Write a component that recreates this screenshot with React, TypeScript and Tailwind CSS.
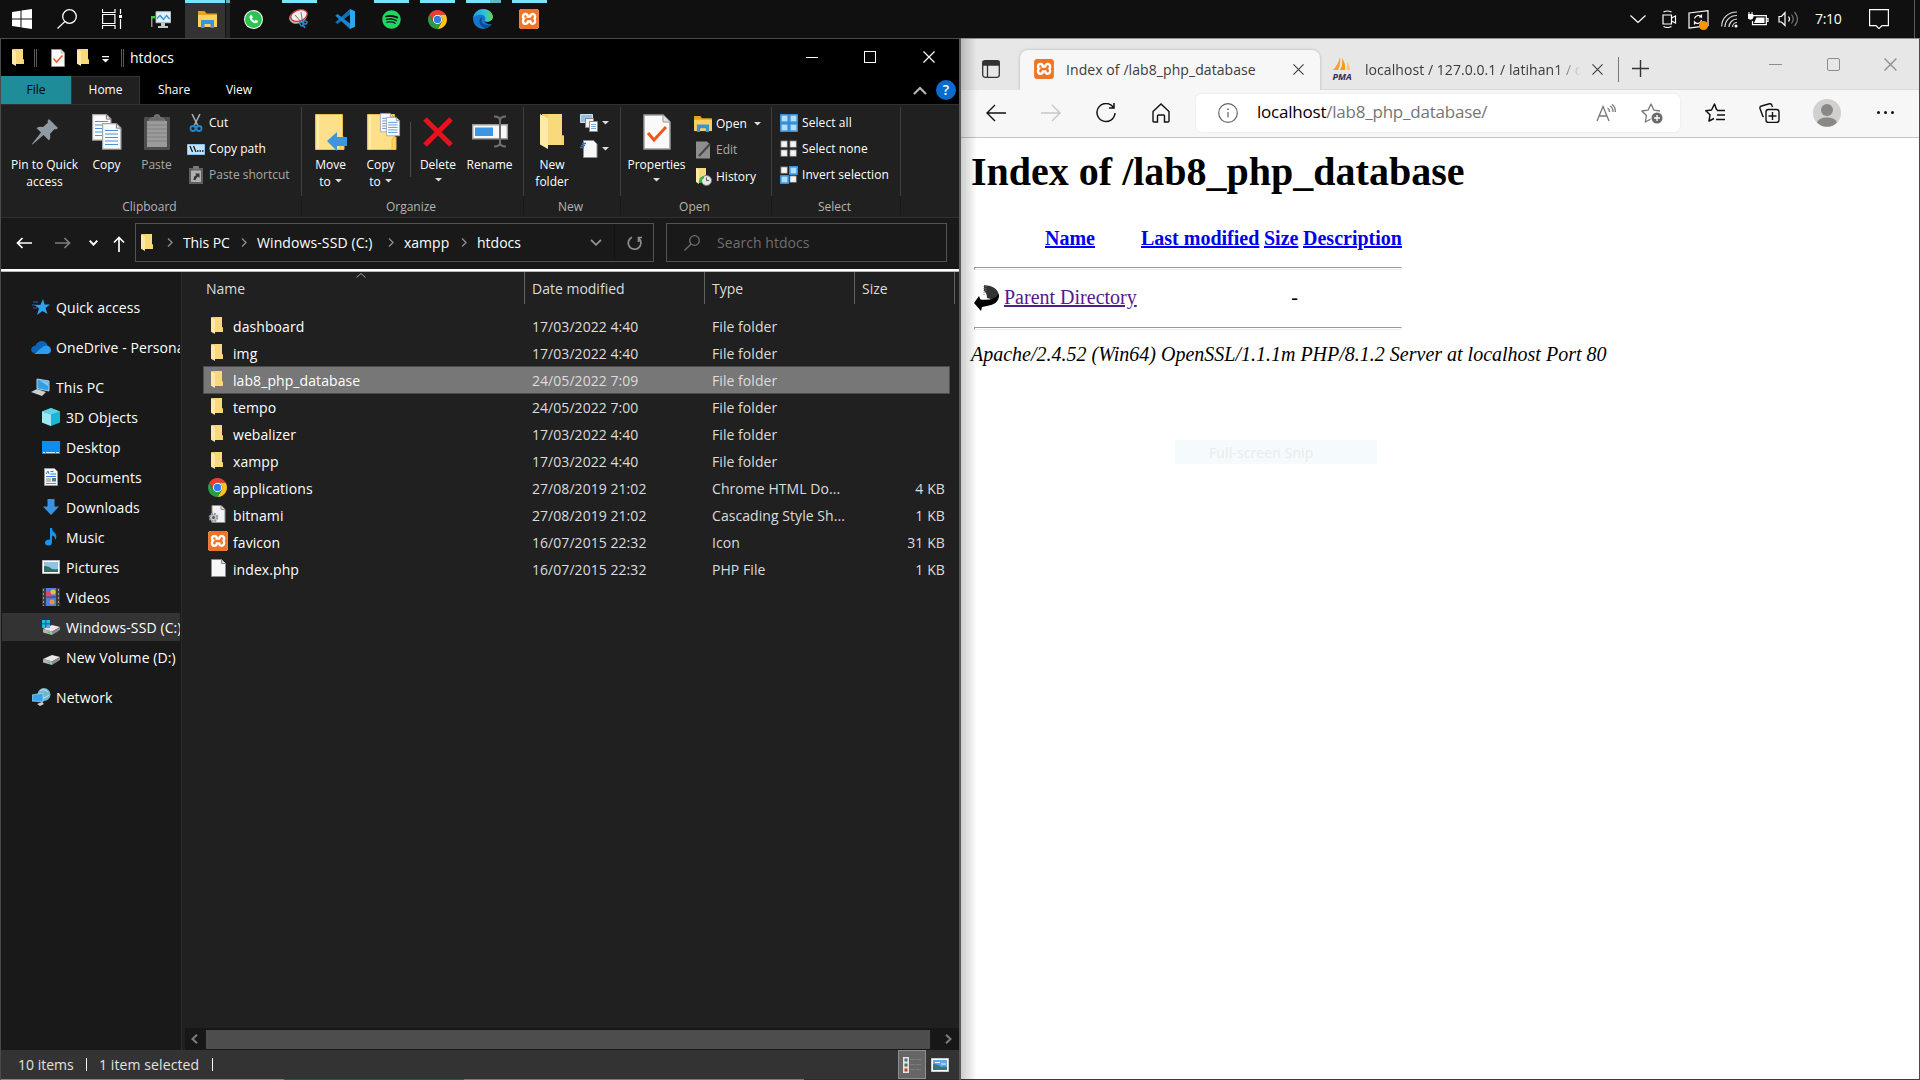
import React from "react";
import { FaSpotify, FaWhatsapp } from "react-icons/fa";
import { SiXampp } from "react-icons/si";

type IconProps = { className?: string };

/* ---------- shared icons ---------- */

const Folder = ({ className = "w-3 h-[17px]" }: IconProps) => (
  <svg viewBox="0 0 12 17" preserveAspectRatio="none" className={className}>
    <path d="M1 0h10v10.500h1v4.500H3z" fill="#f3d06c" />
    <path d="M4 0h7v15H4z" fill="#f8da7c" />
    <path d="M0 0l4 2.200V17L0 14.800z" fill="#ffe9a8" />
    <path d="M10.500 10.500H12V15h-1.500z" fill="#fbd465" />
  </svg>
);

const Chrome = ({ className = "w-5 h-5" }: IconProps) => (
  <svg viewBox="0 0 24 24" className={className}>
    <path d="M12 6H22.390A12 12 0 0 0 1.610 6L6.800 15A6 6 0 0 1 12 6Z" fill="#e8402f" />
    <path d="M17.200 15L12 24A12 12 0 0 0 22.390 6H12A6 6 0 0 1 17.200 15Z" fill="#fcc31e" />
    <path d="M6.800 15L1.610 6A12 12 0 0 0 12 24L17.200 15A6 6 0 0 1 6.800 15Z" fill="#2a9c46" />
    <circle cx="12" cy="12" r="5.900" fill="#fff" />
    <circle cx="12" cy="12" r="4.600" fill="#2f7be8" />
  </svg>
);

const Xampp = ({ className = "w-5 h-5" }: IconProps) => (
  <span className={`flex items-center justify-center bg-white rounded-[3px] overflow-hidden ${className}`}>
    <SiXampp className="w-full h-full text-[#f07427]" />
  </span>
);

const PageIcon = ({ className = "w-[15px] h-[18px]" }: IconProps) => (
  <svg viewBox="0 0 15 18" className={className}>
    <path d="M.5.5h10l4 4v13H.5z" fill="#f7f7f7" stroke="#8d8d8d" />
    <path d="M10.500.5v4h4" fill="#d9d9d9" stroke="#8d8d8d" />
  </svg>
);

const CheckPage = ({ className = "w-[14px] h-[18px]" }: IconProps) => (
  <svg viewBox="0 0 28 36" className={className}>
    <path d="M1 1h19l7 7v27H1z" fill="#fafafa" stroke="#9a9a9a" strokeWidth="1.500" />
    <path d="M20 1v7h7" fill="#e2e2e2" stroke="#9a9a9a" />
    <path d="M5 19l6 7L23 13" fill="none" stroke="#f0571c" strokeWidth="3" />
  </svg>
);

const Explorer = ({ className = "w-[19px] h-[17px]" }: IconProps) => (
  <svg viewBox="0 0 19 17" className={className}>
    <path d="M0 0h6.500l2 2.500H19V8H0z" fill="#e8a31c" />
    <path d="M0 4h19v12H0z" fill="#fdd35d" />
    <path d="M3 9h13v8h-3.500v-4h-6v4H3z" fill="#3c92dc" />
  </svg>
);

const Caret = ({ className = "" }: IconProps) => (
  <svg viewBox="0 0 7 4" className={`w-[7px] h-1 ${className}`}>
    <path d="M0 0h7L3.500 3.500z" fill="#dcdcdc" />
  </svg>
);

const Chevron = ({ className = "" }: IconProps) => (
  <svg viewBox="0 0 6 9" className={`w-1.5 h-[9px] ${className}`}>
    <path d="M1 .5l4 4-4 4" fill="none" stroke="#8b8b8b" strokeWidth="1.400" />
  </svg>
);

const CloseX = ({ className = "w-3 h-3" }: IconProps) => (
  <svg viewBox="0 0 12 12" className={className} stroke="currentColor" strokeWidth="1.200">
    <path d="M.5.5l11 11M11.500.5l-11 11" />
  </svg>
);

/* ---------- taskbar ---------- */

const Slot = ({ children, bar }: { children: React.ReactNode; bar?: "plain" | "split" | "active" }) => (
  <div className="relative h-[38px] w-[46px] shrink-0 flex items-center justify-center">
    {bar === "active" && (
      <div className="absolute left-px top-0 flex h-[38px] w-[45px]">
        <div className="w-10 bg-[#333333] border-t-[3px] border-[#76e5fb]" />
        <div className="w-px bg-[#171717]" />
        <div className="w-1 bg-[#262626] border-t-[3px] border-[#5fb6c7]" />
      </div>
    )}
    {bar === "plain" && <div className="absolute top-0 left-1.5 w-[35px] h-[3px] bg-[#76e5fb]" />}
    {bar === "split" && (
      <div className="absolute top-0 left-1.5 w-[35px] h-[3px] flex">
        <div className="w-6 bg-[#76e5fb]" />
        <div className="grow bg-[#5fb6c7]" />
      </div>
    )}
    <div className="relative">{children}</div>
  </div>
);

const Taskbar = () => (
  <header className="h-[38px] bg-[#101010] flex items-center shrink-0">
    <div className="w-[44px] flex justify-center">
      <svg viewBox="0 0 20 20" className="w-5 h-5" fill="#fff">
        <path d="M0 3l8.500-1.200v7.700H0zM9.500 1.600L20 0v9.500H9.500zM0 10.500h8.500v7.700L0 17zM9.500 10.500H20V20L9.500 18.400z" />
      </svg>
    </div>
    <div className="w-[45px] flex justify-center">
      <svg viewBox="0 0 20 20" className="w-5 h-5" fill="none" stroke="#fff" strokeWidth="1.300">
        <circle cx="12.500" cy="7.500" r="6.800" />
        <path d="M7.800 12.600L.5 19.500" />
      </svg>
    </div>
    <div className="w-[46px] flex justify-center">
      <svg viewBox="0 0 20 20" className="w-5 h-5" fill="none" stroke="#fff" strokeWidth="1.200">
        <path d="M.5 0v3.500h12.500V0M.5 20v-3.500h12.500V20M.6 5.500h12.300v9H.6zM18.500 0v5M18.500 10v10" />
        <path d="M17 6h3v3h-3z" fill="#fff" stroke="none" />
      </svg>
    </div>
    <div className="w-[3px]" />
    <Slot>
      <svg viewBox="0 0 20 19" className="w-5 h-[19px]">
        <path d="M0 6h4v1.500H1.500V17H0z" fill="#8d9396" />
        <path d="M1 6h3v2.500H1z" fill="#31d331" />
        <path d="M5 1.700h14.500v11H5z" fill="#dff2fb" stroke="#b8bdc0" />
        <path d="M6 8.500l3-3 3.500 4 3-4 3 3.500" fill="none" stroke="#2f8fc9" strokeWidth="1.200" />
        <path d="M10 13h4v3h3v2H7v-2h3z" fill="#c4c8ca" />
      </svg>
    </Slot>
    <Slot bar="active"><Explorer className="w-[19px] h-[17px]" /></Slot>
    <Slot>
      <div className="w-[19px] h-[19px] rounded-full bg-white flex items-center justify-center">
        <div className="w-[17px] h-[17px] rounded-full bg-[#2fc351] flex items-center justify-center">
          <svg viewBox="0 0 16 16" className="w-[17px] h-[17px]"><path d="M4.800 4.200q1-1 1.800 0l.8 1.700-.9 1.200q.8 1.500 2.500 2.300l1.100-1.100 1.900.9q.5 1-.6 1.900-1.800 1-4.500-.8Q4.500 8.200 4.200 6q0-1.200.6-1.800z" fill="#fff" /></svg>
        </div>
      </div>
    </Slot>
    <Slot bar="plain">
      <svg viewBox="0 0 20 20" className="w-5 h-5">
        <ellipse cx="9" cy="8" rx="9" ry="6.500" transform="rotate(-20 9 8)" fill="#b9b9b9" />
        <ellipse cx="10" cy="6.500" rx="8.500" ry="5.500" transform="rotate(-20 10 6.500)" fill="#f6eeee" stroke="#cf3232" strokeWidth="1.300" />
        <path d="M6 6l7 8M12 3l1.500 10" stroke="#777" strokeWidth="1" />
        <path d="M12 12c-3 2 0 5 1 5s2-2 0-4c2-2 6-1 5 1s-3 1-4-1c0 3 1 5 2 6" fill="none" stroke="#2c83c9" strokeWidth="1.500" />
      </svg>
    </Slot>
    <Slot>
      <svg viewBox="0 0 20 20" className="w-5 h-5">
        <path d="M15 0l5 2.200v15.600L15 20z" fill="#2aa7f0" />
        <path d="M15 0v5.500L2.500 15 .3 13.200z" fill="#0f72b8" />
        <path d="M15 20v-5.500L2.500 5 .3 6.800z" fill="#1a86d2" />
      </svg>
    </Slot>
    <Slot bar="plain"><FaSpotify className="w-[19px] h-[19px] text-[#1ed760]" /></Slot>
    <Slot bar="plain"><Chrome className="w-[19px] h-[19px]" /></Slot>
    <Slot bar="split">
      <svg viewBox="0 0 20 20" className="w-5 h-5">
        <defs>
          <linearGradient id="edgeTop" x1="0" x2="1">
            <stop offset="0" stopColor="#1a9be0" />
            <stop offset=".6" stopColor="#35c1d6" />
            <stop offset="1" stopColor="#62d84e" />
          </linearGradient>
        </defs>
        <circle cx="10" cy="10" r="10" fill="#1576cf" />
        <path d="M0 9.500C.5 4 5 0 10.300 0 16 0 20 4 20 8.300c0 3-2.200 4.700-4.700 4.700-2.300 0-3.800-1-3.300-2 .8-1 .7-3.800-2.500-4.900C6 5 1.500 6.500 0 9.500z" fill="url(#edgeTop)" />
        <path d="M7.500 9c-2 3-1.500 8 4.500 10 3 .5 6-2 7-4-3 1.500-8 1.500-10-1.500C8.200 12 8.500 10 9.500 8z" fill="#0c4a94" />
        <path d="M20 9v5.500c-3 1.200-6.500.8-8.300-2C14 13.500 18.500 13 20 9z" fill="#101010" />
      </svg>
    </Slot>
    <Slot bar="plain"><Xampp className="w-5 h-5" /></Slot>

    <div className="ml-auto flex items-center h-full pr-[5px] text-white">
      <svg viewBox="0 0 16 8" className="w-4 h-2 mr-4" fill="none" stroke="#fff" strokeWidth="1.200">
        <path d="M.5.5L8 7.500 15.500.5" />
      </svg>
      <svg viewBox="0 0 15 18" className="w-[15px] h-[18px] mr-[11px]" fill="none" stroke="#fff" strokeWidth="1.200">
        <path d="M1 5h8.500v9H1zM9.500 8l4-2v7l-4-2M1.500 2Q5.500 0 9.500 2M1.500 16.500q4 2 8 0" />
      </svg>
      <div className="relative mr-3 w-[21px] h-[19px]">
        <svg viewBox="0 0 21 19" className="w-[21px] h-[19px]" fill="none" stroke="#fff" strokeWidth="1.200">
          <path d="M1 3L20 .7v15L1 18zM6.500 8.500A4 4 0 0 1 13.500 7V4.500M13.500 7H11M13.500 10a4 4 0 0 1-7 2v2.500" />
        </svg>
        <span className="absolute left-[11px] top-[11px] w-[9px] h-[9px] rounded-full bg-[#ff9500]" />
      </div>
      <svg viewBox="0 0 17 17" className="w-[17px] h-[17px] mr-[10px]" fill="none" stroke="#fff" strokeWidth="1.200">
        <path d="M.7 15.500C.7 7 7 1 16 1M4 16C4 9.500 9 4.500 16 4.500M8 16c0-4 3.500-8 8-8M11.500 16c0-2.500 2-4.500 4.500-4.500" stroke="#ddd" />
        <circle cx="15" cy="15" r="1.500" fill="#fff" stroke="none" />
      </svg>
      <svg viewBox="0 0 21 15" className="w-[21px] h-[15px] mr-[9px]" fill="none" stroke="#fff" strokeWidth="1.200">
        <path d="M5 3.600h13.300v9H4.500V9M18.500 6.500H20v3h-1.500" />
        <path d="M8.500 5.500h8v5.500H6z" fill="#fff" stroke="none" />
        <path d="M0 2.500h5v2.200a2.500 2.500 0 0 1-5 0zM1 0v2.500M4 0v2.500" fill="#fff" strokeWidth="1" />
      </svg>
      <svg viewBox="0 0 21 18" className="w-[21px] h-[18px] mr-[16px]" fill="none" stroke="#fff" strokeWidth="1.200">
        <path d="M1 6.500h2.500L7 2.500v13L3.500 12H1zM10.500 6.500q2 2.500 0 5" />
        <path d="M13.500 4.500q3.500 4.500 0 9M16.500 2q6 7 0 14" stroke="#777" />
      </svg>
      <span className="w-[28px] text-[14px] leading-none tracking-[-0.3px] whitespace-nowrap">7:10</span>
      <svg viewBox="0 0 20 20" className="w-5 h-5 ml-[26px]" fill="none" stroke="#fff" strokeWidth="1.200">
        <path d="M.6.6h18.800v16H13l-3 3-3-3H.6z" />
      </svg>
      <div className="ml-[25px] w-px h-full bg-[#5b5b5b]" />
    </div>
  </header>
);

/* ---------- explorer: title bar + ribbon ---------- */

const TitleBar = () => (
  <div className="h-[37px] bg-black flex items-center pl-[11px] text-white">
    <Folder />
    <div className="ml-[10px] w-[3px] h-[18px] border-x border-[#5a5a5a]" />
    <CheckPage className="ml-[14px] w-[14px] h-[18px]" />
    <Folder className="ml-3 w-3 h-[17px]" />
    <svg viewBox="0 0 7 7" className="w-[7px] h-[7px] ml-[13px] mt-[3px]" fill="#fff"><path d="M0 0h7v1.200H0zM0 3h7L3.500 6.500z" /></svg>
    <div className="ml-[12px] w-[3px] h-[18px] border-x border-[#5a5a5a]" />
    <span className="ml-[6px] text-[14px] pb-px">htdocs</span>
    <div className="ml-auto flex items-center pr-[24px] pb-px">
      <div className="w-3 h-px bg-white" />
      <div className="ml-[46px] w-3 h-3 border border-white" />
      <CloseX className="w-3 h-3 ml-[47px]" />
    </div>
  </div>
);

const TabsRow = () => (
  <div className="h-7 bg-black flex items-stretch text-[12px] text-white">
    <div className="w-[70px] bg-[#1f8c99] text-black flex items-center justify-center">File</div>
    <div className="w-[69px] bg-[#202020] border border-b-0 border-[#343434] flex items-center justify-center pb-px">Home</div>
    <div className="w-[68px] flex items-center justify-center">Share</div>
    <div className="w-[62px] flex items-center justify-center">View</div>
    <div className="ml-auto flex items-center pr-[3px]">
      <svg viewBox="0 0 14 9" className="w-[14px] h-[9px] mr-[9px]" fill="none" stroke="#b5b5b5" strokeWidth="2.200"><path d="M1 8l6-6 6 6" /></svg>
      <span className="w-5 h-5 mb-px rounded-full bg-[#0a6ccf] text-white font-semibold text-[14px] leading-none flex items-center justify-center">?</span>
    </div>
  </div>
);

const Big = ({ icon, lines, w, muted, caret }: { icon: React.ReactNode; lines: string[]; w: string; muted?: boolean; caret?: boolean }) => (
  <div className={`flex flex-col items-center ${w} ${muted ? "text-[#a9a9a9]" : "text-white"}`}>
    <div className="h-[49px] flex items-center">{icon}</div>
    {lines.map((l, i) => (
      <div key={l} className="h-[17px] leading-[17px] whitespace-nowrap flex items-center gap-1">
        {l}
        {caret && i > 0 && i === lines.length - 1 && <Caret className="-mt-0.5" />}
      </div>
    ))}
    {caret && lines.length === 1 && <Caret className="mt-[5px]" />}
  </div>
);

const Small = ({ icon, label, muted, caret }: { icon: React.ReactNode; label: string; muted?: boolean; caret?: boolean }) => (
  <div className={`h-[26px] flex items-center whitespace-nowrap ${muted ? "text-[#a9a9a9]" : "text-white"}`}>
    <span className="w-[22px] flex items-center">{icon}</span>
    {label}
    {caret && <Caret className="ml-[7px]" />}
  </div>
);

const Group = ({ label, w, children }: { label: string; w: string; children: React.ReactNode }) => (
  <div className={`flex ${w}`}>
    <div className="grow min-w-0 flex flex-col">
      <div className="flex h-[92px] pt-[2px]">{children}</div>
      <div className="text-center text-[#b4b4b4] leading-[19px] pr-[3px]">{label}</div>
    </div>
    <div className="w-px mt-[2px] h-[108px] bg-[#181818]"><div className="h-[89px] bg-[#3f3f3f]" /></div>
  </div>
);

const Doc = ({ x, y, s = 1 }: { x: number; y: number; s?: number }) => (
  <g transform={`translate(${x} ${y}) scale(${s})`}>
    <path d="M.6.6h13.800l4.500 4.500v21H.6z" fill="#fbfbfb" stroke="#a5a5a5" strokeWidth="1.200" />
    <path d="M14.400.6v4.500h4.500" fill="none" stroke="#777" />
    <path d="M3 7.500h13M3 11h13M3 14.500h13M3 18h13M3 21.500h13" stroke="#4c91dd" strokeWidth="1.200" />
  </g>
);

const BigFolder = () => (
  <>
    <path d="M.5 2.500h27v35H.5z" fill="#ffe08a" stroke="#e9bf4b" />
    <path d="M3 3v34" stroke="#fff0bd" strokeWidth="1.500" />
    <path d="M25 28q0-3 4-3v12.500h-4z" fill="#fbd465" stroke="#e9bf4b" />
  </>
);

const Tiles = ({ on }: { on: boolean[] }) => (
  <svg viewBox="0 0 18 18" className="w-[18px] h-[18px]">
    {[[0, 0], [9, 0], [0, 9], [9, 9]].map(([x, y], i) => (
      <rect key={i} x={x + 0.9} y={y + 0.9} width={on[i] ? 7.2 : 6.4} height={on[i] ? 7.2 : 6.4} fill={on[i] ? "#b5ddfb" : "#f5f5f5"} stroke={on[i] ? "#3d9ae6" : "#6d6d6d"} strokeWidth={on[i] ? 1.6 : 0.8} />
    ))}
  </svg>
);

const Ribbon = () => (
  <div className="h-[114px] bg-[#202020] border-y border-[#313131] flex text-[12px]">
    <Group label="Clipboard" w="w-[301px]">
      <Big w="w-[87px]" lines={["Pin to Quick", "access"]} icon={
        <svg viewBox="0 0 26 26" className="w-[26px] h-[26px]" fill="#8f9aa3"><path d="M17 0l9 9-2 1.500-1.500-.5-4.500 5q1 4-1 6.500l-5.500-5.500L.5 25.500 0 25l9-11.500L4.500 9q3-2 6.500-1l5-4.500L15.500 2z" /></svg>
      } />
      <Big w="w-[37px]" lines={["Copy"]} icon={
        <svg viewBox="0 0 30 36" className="w-[30px] h-9"><Doc x={0} y={0} /><Doc x={10} y={9} /></svg>
      } />
      <Big w="w-[63px]" muted lines={["Paste"]} icon={
        <svg viewBox="0 0 26 36" className="w-[26px] h-9">
          <rect y="3" width="26" height="33" rx="1" fill="#4d4d4d" />
          <path d="M3 7h20v26H3z" fill="#9b9b9b" />
          <path d="M3 11h20M3 15h20M3 19h20M3 23h20M3 27h20" stroke="#808080" />
          <path d="M5 7q0-3 5-3.500 0-3 3-3t3 3q5 .5 5 3.500z" fill="#6a6a6a" stroke="#8a8a8a" strokeWidth=".7" />
        </svg>
      } />
      <div className="pt-[3px] -ml-[1px]">
        <Small label="Cut" icon={
          <svg viewBox="0 0 18 18" className="w-[18px] h-[18px]" fill="none">
            <path d="M5 0l6 12M13 0L7 12" stroke="#a9b3ba" strokeWidth="1.500" />
            <circle cx="6" cy="14.500" r="2.500" stroke="#2586c8" strokeWidth="1.800" /><circle cx="12" cy="14.500" r="2.500" stroke="#2586c8" strokeWidth="1.800" />
          </svg>} />
        <Small label="Copy path" icon={
          <svg viewBox="0 0 18 11" className="w-[18px] h-[11px]">
            <path d="M.5.5h17v10H.5z" fill="#bfe3fa" stroke="#8cc4ea" /><path d="M3 2l2.500 6M6.500 2L9 8" stroke="#111" strokeWidth="1.200" /><path d="M10 7h1.500M12.500 7H14M15 7h1.500" stroke="#111" strokeWidth="1.500" />
          </svg>} />
        <Small label="Paste shortcut" muted icon={
          <svg viewBox="0 0 18 18" className="w-[18px] h-[18px]">
            <path d="M2 2h14v16H2z" fill="#5f5f5f" /><path d="M4 4.500h10v11.500H4z" fill="#b0b0b0" /><path d="M6 0h6v3.500H6z" fill="#777" /><path d="M6.500 14q0-4 3-5L8 7.500h4.500V12L11 10.500q-2 1-2.500 3.500z" fill="#333" />
          </svg>} />
      </div>
    </Group>
    <Group label="Organize" w="w-[222px]">
      <div className="w-[3px]" />
      <Big w="w-[51px]" caret lines={["Move", "to"]} icon={
        <svg viewBox="0 0 33 40" className="w-[33px] h-10 ml-[2px]"><BigFolder /><path d="M12 29l10-9v5h10v9H22v5z" fill="#3d95e0" /></svg>
      } />
      <Big w="w-[49px]" caret lines={["Copy", "to"]} icon={
        <svg viewBox="0 0 34 40" className="w-[34px] h-10 ml-[7px]"><BigFolder /><Doc x={13} y={1} s={0.72} /><Doc x={19} y={5} s={0.72} /></svg>
      } />
      <div className="ml-[5px] mt-[15px] w-px h-[55px] bg-[#4a4a4a]" />
      <Big w="w-[54px]" caret lines={["Delete"]} icon={
        <svg viewBox="0 0 30 30" className="w-[30px] h-[30px]" stroke="#e8111c" strokeWidth="5"><path d="M2 2l26 26M28 2L2 28" /></svg>
      } />
      <Big w="w-[49px]" lines={["Rename"]} icon={
        <svg viewBox="0 0 36 34" className="w-9 h-[34px]">
          <path d="M.7 9.700h34.600v14H.7z" fill="#f7f7f7" stroke="#9c9c9c" strokeWidth="1.400" />
          <path d="M3 12.500h18v8.500H3z" fill="#3a97e3" />
          <path d="M22 1.500q6 0 6 4v22q0 4-6 4M34 1.500q-6 0-6 4v22q0 4 6 4" fill="none" stroke="#6e6e6e" strokeWidth="2" />
        </svg>
      } />
    </Group>
    <Group label="New" w="w-[97px]">
      <Big w="w-[56px]" lines={["New", "folder"]} icon={<Folder className="w-[24px] h-[35px]" />} />
      <div className="pt-[3px]">
        <div className="h-[26px] flex items-center gap-1">
          <svg viewBox="0 0 18 18" className="w-[18px] h-[18px]">
            <path d="M.5.5h12v8H.5z" fill="#8cc5e0" stroke="#cfe3ec" /><path d="M5.500 4.500h8v9h-8z" fill="#eee" stroke="#888" /><path d="M9.500 7.500h8v10h-8z" fill="#fff" stroke="#888" /><path d="M11 10.500h5M11 12.500h5M11 14.500h5" stroke="#7aaee0" />
          </svg>
          <Caret />
        </div>
        <div className="h-[26px] flex items-center gap-1">
          <svg viewBox="0 0 18 18" className="w-[18px] h-[18px]">
            <path d="M3.500.5h10l3.500 3.500v13.500H3.500z" fill="#f7f7f7" stroke="#8d8d8d" /><path d="M2 3.500h4M1 5.500h4M0 7.500h4" stroke="#2174c4" strokeWidth="1.300" />
          </svg>
          <Caret />
        </div>
      </div>
    </Group>
    <Group label="Open" w="w-[151px]">
      <Big w="w-[71px]" caret lines={["Properties"]} icon={<CheckPage className="w-[28px] h-9" />} />
      <div className="pt-1 pl-[2px]">
        <Small label="Open" caret icon={<Explorer className="w-[18px] h-4" />} />
        <Small label="Edit" muted icon={
          <svg viewBox="0 0 18 18" className="w-[18px] h-[18px]"><path d="M2 .5h11l3 3v14H2z" fill="#8e8e8e" /><path d="M5 15L16 3" stroke="#444" strokeWidth="2" /></svg>} />
        <div className="pt-px">
          <Small label="History" icon={
            <svg viewBox="0 0 18 18" className="w-[18px] h-[18px]">
              <path d="M2 0h10v14H2z" fill="#f8da7c" /><path d="M2 0l3 2v14l-3-2z" fill="#ffe9a8" />
              <circle cx="12.500" cy="12.500" r="5" fill="#e6e6e6" stroke="#777" /><path d="M12.500 9.500v3h2.500" stroke="#555" fill="none" /><path d="M6 15q0-5 4-6" stroke="#2fb53f" strokeWidth="2.500" fill="none" />
            </svg>} />
        </div>
      </div>
    </Group>
    <Group label="Select" w="w-[129px]">
      <div className="pl-2 pt-[3px] tracking-[0.08px]">
        <Small label="Select all" icon={<Tiles on={[true, true, true, true]} />} />
        <Small label="Select none" icon={<Tiles on={[false, false, false, false]} />} />
        <Small label="Invert selection" icon={<Tiles on={[false, true, true, false]} />} />
      </div>
    </Group>
  </div>
);

const AddressRow = () => (
  <div className="h-[51px] bg-[#191919] flex items-center pl-[15px] pb-0.5 text-[14px] text-white">
    <svg viewBox="0 0 16 12" className="w-4 h-3" fill="none" stroke="#fff" strokeWidth="1.700"><path d="M6.500 1l-5 5 5 5M1.500 6H16" /></svg>
    <svg viewBox="0 0 16 12" className="w-4 h-3 ml-[23px]" fill="none" stroke="#7d7d7d" strokeWidth="1.700"><path d="M9.500 1l5 5-5 5M14.500 6H0" /></svg>
    <svg viewBox="0 0 9 6" className="w-[9px] h-1.5 ml-[18px]" fill="none" stroke="#fff" strokeWidth="1.900"><path d="M.7.7l3.800 4 3.800-4" /></svg>
    <svg viewBox="0 0 12 16" className="w-3 h-4 ml-[15px] mt-[3px]" fill="none" stroke="#fff" strokeWidth="1.700"><path d="M1 6.500l5-5 5 5M6 1.500V16" /></svg>
    <div className="ml-[10px] w-[519px] h-[39px] border border-[#535353] flex items-center">
      <Folder className="ml-[5px] w-3 h-[17px]" />
      <Chevron className="ml-[14px]" />
      <span className="ml-[10px] w-[47px] tracking-[-0.1px] whitespace-nowrap">This PC</span>
      <Chevron className="ml-[11px]" />
      <span className="ml-[10px] w-[120px] tracking-[0.1px] whitespace-nowrap">Windows-SSD (C:)</span>
      <Chevron className="ml-[11px]" />
      <span className="ml-[10px] w-[46px] whitespace-nowrap">xampp</span>
      <Chevron className="ml-[11px]" />
      <span className="ml-[10px]">htdocs</span>
      <svg viewBox="0 0 12 7" className="w-3 h-[7px] ml-auto mr-[12px]" fill="none" stroke="#969696" strokeWidth="1.700"><path d="M1 .8l5 5 5-5" /></svg>
      <div className="w-px h-[37px] bg-[#131313]" />
      <svg viewBox="0 0 16 16" className="w-4 h-4 ml-[12px] mr-[10px]" fill="none" stroke="#8e8e8e" strokeWidth="1.700"><path d="M5 2.200A6.300 6.300 0 1 0 11.500 3M11.500 7V2.500H15" /></svg>
    </div>
    <div className="ml-3 w-[281px] h-[39px] border border-[#535353] flex items-center pl-[17px] text-[#6f6f6f]">
      <svg viewBox="0 0 16 16" className="w-4 h-4" fill="none" stroke="#6f6f6f" strokeWidth="1.300"><circle cx="10.500" cy="5.500" r="4.800" /><path d="M7 9L.5 15.500" /></svg>
      <span className="ml-[17px] tracking-[0.05px]">Search htdocs</span>
    </div>
  </div>
);

/* ---------- explorer: sidebar ---------- */

const ThisPcIcon = () => (
  <svg viewBox="0 0 20 18" className="w-5 h-[18px]">
    <path d="M6 1l12 2v10L6 10.500z" fill="#2f9fe8" stroke="#b9cfdc" /><path d="M8 2l9 2v4z" fill="#7cc9f7" /><path d="M0 14l6-3 9 3-4 4z" fill="#c9ced2" />
  </svg>
);

const Drive = ({ win }: { win?: boolean }) => (
  <svg viewBox="0 0 18 16" className="w-[18px] h-4">
    <path d="M1 10l9-4 8 2-8 4.500z" fill="#e9e9e9" /><path d="M1 10l9 2.500V16l-9-2.500z" fill="#b5b5b5" /><path d="M10 12.500L18 8v3l-8 5z" fill="#8d8d8d" />
    <path d="M6 13l2 .5v1L6 14z" fill="#2fd046" />
    {win && <path d="M0 1h3.500v3.500H0zM4.300 1H8v3.500H4.300zM0 5.300h3.500V9H0zM4.300 5.300H8V9H4.300z" fill="#19bff0" />}
  </svg>
);

const sideIcons: Record<string, React.ReactNode> = {
  quick: <svg viewBox="0 0 18 16" className="w-[18px] h-4"><path d="M11 0l1.500 5.500H18l-4.500 3.500 2 6L10.500 12 5 16l2-6.500L2.500 6l6-.3z" fill="#2fa3f2" /><path d="M1 3h5M0 6h4M1 9h4" stroke="#1b6da8" strokeWidth="1.200" /></svg>,
  cloud: <svg viewBox="0 0 20 13" className="w-5 h-[13px]"><path d="M3 12Q0 11 .2 8.500.5 5 4.500 4.500 6.500 0 11 0q4.500.3 5.500 4.500L10 9z" fill="#0d64b8" /><path d="M3 13l8-6.500q4-3 6.500-1.500Q20 6.500 20 9q0 3.500-3.500 4z" fill="#2d9df0" /></svg>,
  pc: <ThisPcIcon />,
  cube: <svg viewBox="0 0 18 18" className="w-[18px] h-[18px]"><path d="M9 0l9 3.500v11L9 18 0 14.500v-11z" fill="#1bb6d6" /><path d="M0 3.500l9 3V18l-9-3.500z" fill="#9fe7f2" /><path d="M9 0l9 3.500-9 3-9-3z" fill="#5ed1e4" /></svg>,
  desktop: <svg viewBox="0 0 18 13" className="w-[18px] h-[13px]"><path d="M0 0h18v13H0z" fill="#0d8df0" /><path d="M1 11.500h2M4 11.500h9M14 11.500h3" stroke="#cfeaff" /></svg>,
  docs: <svg viewBox="0 0 14 18" className="w-[14px] h-[18px]"><path d="M.5.5h10l3 3v14H.5z" fill="#f7f7f7" stroke="#999" /><path d="M2 6l2-3 1 3" stroke="#2a86d8" fill="none" /><path d="M6.500 3.500h3M6.500 6H12M2 8.500h10" stroke="#2a86d8" /><path d="M2 11h5M2 13h5M2 15.500h10" stroke="#888" /><path d="M8 10h4v3.500H8z" fill="#4a7f9c" /></svg>,
  down: <svg viewBox="0 0 16 16" className="w-4 h-4"><path d="M4.500 0h7v7.500H16L8 16 0 7.500h4.500z" fill="#3a93e0" /></svg>,
  music: <svg viewBox="0 0 12 18" className="w-3 h-[18px]"><path d="M5 0h2q0 3 2.500 4.500Q13 8 10 12q.5-4-3-4.500V14q0 3.500-3.500 3.500T0 14.500 5 11.500z" fill="#1495f0" /></svg>,
  pics: <svg viewBox="0 0 18 14" className="w-[18px] h-[14px]"><path d="M.5.500h17v13H.5z" fill="#fff" stroke="#bbb" /><path d="M2 2h14v10H2z" fill="#8dc4ea" /><path d="M2 6q5 0 8 3 3 .5 6 0v3H2z" fill="#2f6f60" /></svg>,
  video: <svg viewBox="0 0 18 18" className="w-[18px] h-[18px]"><path d="M0 0h18v18H0z" fill="#3b3b3b" /><path d="M4 0h10v8.500H4zM4 9.500h10V18H4z" fill="#4f7de0" /><path d="M4 4h5v4.500H4z" fill="#d44a68" /><circle cx="11" cy="4" r="2.500" fill="#e8c13a" /><circle cx="10" cy="14" r="2.500" fill="#e8963a" /><path d="M1.500 1v17M16.500 1v17" stroke="#999" strokeDasharray="2 2" /></svg>,
  win: <Drive win />,
  drive: <Drive />,
  net: <svg viewBox="0 0 19 18" className="w-[19px] h-[18px]"><circle cx="12" cy="6.500" r="6.500" fill="#6fb6cf" /><path d="M8 3q4-3 8 1M7 8q5 4 10-1" stroke="#c5e6f0" fill="none" /><path d="M0 7l11-2v9L0 13z" fill="#38a4ee" stroke="#bcd7e6" strokeWidth=".7" /><path d="M5 16l5-2 2 2-4 2z" fill="#ccd" /></svg>,
};

const sideItems = [
  { icon: "quick", label: "Quick access", top: true, gap: "mb-2.5" },
  { icon: "cloud", label: "OneDrive - Personal", top: true, gap: "mb-2.5" },
  { icon: "pc", label: "This PC", top: true, gap: "" },
  { icon: "cube", label: "3D Objects", gap: "" },
  { icon: "desktop", label: "Desktop", gap: "" },
  { icon: "docs", label: "Documents", gap: "" },
  { icon: "down", label: "Downloads", gap: "" },
  { icon: "music", label: "Music", gap: "" },
  { icon: "pics", label: "Pictures", gap: "" },
  { icon: "video", label: "Videos", gap: "" },
  { icon: "win", label: "Windows-SSD (C:)", gap: "", active: true },
  { icon: "drive", label: "New Volume (D:)", gap: "mb-2.5" },
  { icon: "net", label: "Network", top: true, gap: "" },
];

const Sidebar = () => (
  <nav className="w-[181px] bg-[#191919] pt-5 pl-px pr-px border-r border-[#2b2b2b] shrink-0 text-[14px] tracking-[0.1px] text-white">
    {sideItems.map((it) => (
      <div key={it.label} className={`h-[30px] py-px flex ${it.gap}`}>
        <div className={`w-full flex items-center overflow-hidden whitespace-nowrap ${it.active ? "bg-[#333333]" : ""}`}>
          <span className={`shrink-0 flex items-center justify-center w-5 mr-[5px] ${it.top ? "ml-[29px]" : "ml-[39px]"}`}>{sideIcons[it.icon]}</span>
          {it.label}
        </div>
      </div>
    ))}
  </nav>
);

/* ---------- explorer: file list ---------- */

const GearPage = () => (
  <svg viewBox="0 0 18 18" className="w-[18px] h-[18px]">
    <path d="M4 .5h9l4 4v13H4z" fill="#f2f2f2" stroke="#8d8d8d" /><path d="M13 .5v4h4" fill="#ddd" stroke="#8d8d8d" />
    <circle cx="5.500" cy="12.500" r="3.700" fill="#c9cfd3" stroke="#8e979c" strokeWidth="2.200" strokeDasharray="1.800 1.100" /><circle cx="5.500" cy="12.500" r="1.500" fill="#555" />
  </svg>
);

const files = [
  { name: "dashboard", date: "17/03/2022 4:40", type: "File folder", size: "", kind: "folder" },
  { name: "img", date: "17/03/2022 4:40", type: "File folder", size: "", kind: "folder" },
  { name: "lab8_php_database", date: "24/05/2022 7:09", type: "File folder", size: "", kind: "folder", selected: true },
  { name: "tempo", date: "24/05/2022 7:00", type: "File folder", size: "", kind: "folder" },
  { name: "webalizer", date: "17/03/2022 4:40", type: "File folder", size: "", kind: "folder" },
  { name: "xampp", date: "17/03/2022 4:40", type: "File folder", size: "", kind: "folder" },
  { name: "applications", date: "27/08/2019 21:02", type: "Chrome HTML Do...", size: "4 KB", kind: "chrome" },
  { name: "bitnami", date: "27/08/2019 21:02", type: "Cascading Style Sh...", size: "1 KB", kind: "css" },
  { name: "favicon", date: "16/07/2015 22:32", type: "Icon", size: "31 KB", kind: "xampp" },
  { name: "index.php", date: "16/07/2015 22:32", type: "PHP File", size: "1 KB", kind: "page" },
];

const fileIcon: Record<string, React.ReactNode> = {
  folder: <Folder className="w-3 h-[17px] ml-[3px]" />,
  chrome: <Chrome className="w-[19px] h-[19px]" />,
  css: <GearPage />,
  xampp: <Xampp className="w-5 h-5" />,
  page: <PageIcon className="w-[15px] h-[18px] ml-[3px]" />,
};

const FileList = () => (
  <section className="grow min-w-0 bg-[#202020] flex flex-col text-[14px] text-[#dcdcdc] pl-[3px]">
    <div className="relative h-8 flex items-center pl-[21px]">
      <svg viewBox="0 0 10 5" className="absolute left-[171px] top-px w-[10px] h-[5px]" fill="none" stroke="#a5a5a5"><path d="M.5 4.500L5 .5l4.500 4" /></svg>
      <span className="w-[318px]">Name</span>
      <div className="w-px h-full bg-[#636363]" />
      <span className="w-[179px] pl-[7px]">Date modified</span>
      <div className="w-px h-full bg-[#636363]" />
      <span className="w-[149px] pl-[7px]">Type</span>
      <div className="w-px h-full bg-[#636363]" />
      <span className="w-[99px] pl-[7px]">Size</span>
      <div className="w-px h-full bg-[#636363]" />
    </div>
    <div className="pt-2 pl-[18px] grow">
      {files.map((f) => (
        <div key={f.name} className={`w-[747px] h-[28px] -mb-px border flex items-center whitespace-nowrap ${f.selected ? "bg-[#777777] border-[#4c4c4c]" : "border-transparent"}`}>
          <span className="w-[25px] ml-1 flex items-center -mt-0.5">{fileIcon[f.kind]}</span>
          <span className="w-[299px] text-white tracking-[0.08px]">{f.name}</span>
          <span className="w-[180px] tracking-[0.05px]">{f.date}</span>
          <span className="w-[150px] tracking-[0.06px]">{f.type}</span>
          <span className="w-[83px] text-right tracking-[0.1px]">{f.size}</span>
        </div>
      ))}
    </div>
    <div className="h-[22px] bg-[#171717] flex items-center pt-px pb-px">
      <svg viewBox="0 0 7 10" className="w-[7px] h-[10px] ml-[6px] mr-2" fill="none" stroke="#7b7b7b" strokeWidth="2"><path d="M6 .7L1.500 5 6 9.300" /></svg>
      <div className="w-[724px] h-[19px] bg-[#4d4d4d]" />
      <svg viewBox="0 0 7 10" className="w-[7px] h-[10px] ml-[15px]" fill="none" stroke="#7b7b7b" strokeWidth="2"><path d="M1 .7L5.500 5 1 9.300" /></svg>
    </div>
  </section>
);

const StatusBar = () => (
  <div className="h-[29px] bg-[#333333] flex items-center pl-[17px] text-[14px] text-[#e2e2e2]">
    <span className="w-[68px] whitespace-nowrap">10 items</span>
    <div className="w-px h-[13px] bg-white" />
    <span className="ml-3 w-[113px] tracking-[0.1px] whitespace-nowrap">1 item selected</span>
    <div className="w-px h-[13px] bg-white" />
    <div className="ml-auto flex items-center pr-[10px]">
      <div className="w-7 h-[29px] bg-[#666666] border border-[#8e8e8e] flex items-center justify-center">
        <svg viewBox="0 0 18 16" className="w-[18px] h-4">
          <path d="M0 0h6v16H0z" fill="#e4e4e4" /><path d="M1.500 1.500h3v3h-3z" fill="#4e6f7e" /><path d="M1.500 6.500h3v3h-3z" fill="#5a6b5a" /><path d="M1.500 11.500h3v3h-3z" fill="#b8432e" />
          <path d="M7 2.500h5M13 2.500h5M7 7.500h5M13 7.500h5M7 12.500h5M13 12.500h5" stroke="#7c7c7c" />
        </svg>
      </div>
      <svg viewBox="0 0 18 14" className="w-[18px] h-[14px] ml-[5px]"><path d="M.5.5h17v13H.5z" fill="#fff" stroke="#ccc" /><path d="M2 2h14v10H2z" fill="#5fa6ea" /><path d="M2 6q5 0 8 3 3-1 6 0v3H2z" fill="#3d7480" /><path d="M4 4.500h5M10 6h5" stroke="#e4f2ff" /></svg>
    </div>
  </div>
);

const ExplorerWindow = () => (
  <div className="w-[961px] shrink-0 bg-black border-t border-l border-[#4a4a4a] border-r-2 border-r-[#5a5a5a] flex flex-col">
    <TitleBar />
    <TabsRow />
    <Ribbon />
    <AddressRow />
    <div className="h-[3px] bg-white border-b border-[#b9b9b9]" />
    <div className="grow flex min-h-0">
      <Sidebar />
      <FileList />
    </div>
    <StatusBar />
    <div className="h-px flex bg-[#7d7d7d]">
      <div className="w-[283px] bg-[#838580]" />
      <div className="w-[180px] bg-[#32505a]" />
      <div className="w-[340px] bg-[#77777c]" />
      <div className="grow bg-[#2c2c2c]" />
    </div>
  </div>
);

/* ---------- browser ---------- */

const TabStrip = () => (
  <div className="h-[51px] bg-[#e7e7e7] flex items-end text-[14px] text-[#3b3b3b]">
    <div className="w-[59px] h-[40px] flex items-center pl-[21px] pb-0.5">
      <svg viewBox="0 0 18 18" className="w-[18px] h-[18px]" fill="none" stroke="#333" strokeWidth="1.300"><rect x=".7" y=".7" width="16.600" height="16.600" rx="2.500" /><path d="M1 1.500h16V5H1z" fill="#333" /><path d="M5.500 5v12" /></svg>
    </div>
    <div className="w-[300px] h-[40px] bg-[#f7f7f7] rounded-t-lg shadow-[0_0_3px_rgba(0,0,0,0.25)] [clip-path:inset(-4px_-4px_0_-4px)] flex items-center pl-[14px] pb-0.5">
      <Xampp className="w-5 h-5" />
      <span className="ml-3 w-[193px] tracking-[0.08px] whitespace-nowrap">Index of /lab8_php_database</span>
      <CloseX className="w-[11px] h-[11px] ml-[34px]" />
    </div>
    <div className="w-[299px] h-[40px] border-b border-[#dadada] flex items-center pl-[12px] pb-px">
      <svg viewBox="0 0 20 24" className="w-5 h-6">
        <path d="M8 0q1 8-2 13H1Q6 8 8 0z" fill="#f2a13c" /><path d="M10 1q4 6 3 12H8q3-5 2-12z" fill="#f89c0e" /><path d="M15 4q3 5 3 9h-3.500q1-4 .5-9z" fill="#fbc478" />
        <text x="10" y="22.500" textAnchor="middle" fontSize="9" fontWeight="700" fontStyle="italic" fontFamily="Open Sans" fill="#2c2c5e">PMA</text>
      </svg>
      <span className="ml-[13px] w-[218px] tracking-[0.06px] overflow-hidden whitespace-nowrap [mask-image:linear-gradient(90deg,#000_88%,transparent_99%)]">localhost / 127.0.0.1 / latihan1 / data</span>
      <CloseX className="w-[11px] h-[11px] ml-[9px]" />
      <div className="w-px h-[25px] bg-[#777] ml-auto" />
    </div>
    <div className="grow h-[40px] border-b border-[#dadada] flex items-center">
      <svg viewBox="0 0 17 17" className="w-[17px] h-[17px] ml-[13px] mb-0.5" stroke="#333" strokeWidth="1.400"><path d="M8.500 0v17M0 8.500h17" /></svg>
      <div className="ml-auto flex items-center pr-[22px] mb-2.5 text-[#8d8d8d]">
        <div className="w-[13px] h-px bg-[#8d8d8d]" />
        <div className="ml-[45px] w-[13px] h-[13px] border border-[#8d8d8d] rounded-[2px]" />
        <CloseX className="w-[13px] h-[13px] ml-[44px]" />
      </div>
    </div>
  </div>
);

const Toolbar = () => (
  <div className="h-12 bg-[#f7f7f7] border-b border-[#c4c4c4] flex items-center pl-[25px] pb-0.5 text-[#222]">
    <svg viewBox="0 0 20 18" className="w-5 h-[18px]" fill="none" stroke="#111" strokeWidth="1.400"><path d="M9 1L1 9l8 8M1 9h19" /></svg>
    <svg viewBox="0 0 20 18" className="w-5 h-[18px] ml-[35px]" fill="none" stroke="#c6c6c6" strokeWidth="1.400"><path d="M11 1l8 8-8 8M19 9H0" /></svg>
    <svg viewBox="0 0 20 20" className="w-5 h-5 ml-[35px]" fill="none" stroke="#111" strokeWidth="1.500"><path d="M17.500 4.500A9 9 0 1 0 19 10M18 0v5h-5" /></svg>
    <svg viewBox="0 0 18 20" className="w-[18px] h-5 ml-[36px]" fill="none" stroke="#111" strokeWidth="1.400"><path d="M1 8.500L9 1l8 7.500V18q0 1-1 1h-3.500v-6q0-1-1-1h-5q-1 0-1 1v6H2q-1 0-1-1z" /></svg>
    <div className="ml-[26px] w-[484px] h-[38px] bg-white rounded-md shadow-[0_0_3px_rgba(0,0,0,0.08)] flex items-center pl-[22px]">
      <svg viewBox="0 0 20 20" className="w-5 h-5" fill="none" stroke="#666" strokeWidth="1.200"><circle cx="10" cy="10" r="9.300" /><path d="M10 9v5.500" /><path d="M10 5.500V7" strokeWidth="1.500" /></svg>
      <span className="ml-[19px] text-[17px] tracking-[-0.22px] text-[#757575] whitespace-nowrap pb-px"><span className="text-black">localhost</span>/lab8_php_database/</span>
      <svg viewBox="0 0 20 18" className="w-5 h-[18px] ml-auto" fill="none" stroke="#777" strokeWidth="1.300"><path d="M1 17L7 2.500 13 17M3 12h8M11.500 4q2 1 2 4M14 2q3 1.500 3 6M16 .5q3.500 2 3.300 7.500" /></svg>
      <svg viewBox="0 0 22 21" className="w-[22px] h-[21px] ml-[25px] mr-[17px] mt-px" fill="none" stroke="#777" strokeWidth="1.300">
        <path d="M19 8l-6-.8L10 1 7 7.200.8 8l4.700 4.500L4.300 19l5.200-2.800" strokeLinejoin="round" /><circle cx="16" cy="15" r="5.500" fill="#6b6b6b" stroke="none" /><path d="M16 12v6M13 15h6" stroke="#fff" />
      </svg>
    </div>
    <svg viewBox="0 0 20 20" className="w-5 h-5 ml-[25px]" fill="none" stroke="#111" strokeWidth="1.500"><path d="M12.500 6.800L11.500 6.500 9.500 1 6.500 7 .8 7.800l4.200 4L4 18l5-2.500M12 7.500h8M12 12h8M11 16.500h9" strokeLinejoin="round" /></svg>
    <svg viewBox="0 0 21 20" className="w-[21px] h-5 ml-[34px]" fill="none" stroke="#111" strokeWidth="1.400"><rect x="7" y="6.500" width="13" height="13" rx="2.500" /><path d="M13.500 9v8M9.500 13h8M4.500 14Q3.500 13 3 11L1 5.500Q.5 3.500 2.500 3l8-2.200Q12.500.5 13 2.500l.5 1.500" /></svg>
    <svg viewBox="0 0 28 28" className="w-7 h-7 ml-[33px]"><circle cx="14" cy="14" r="14" fill="#d2d0ce" /><circle cx="14" cy="11" r="6" fill="#8a8886" /><path d="M4 23.500q2-5 10-5t10 5A14 14 0 0 1 4 23.500z" fill="#8a8886" /></svg>
    <div className="ml-9 flex gap-1">
      <span className="w-[3px] h-[3px] rounded-full bg-[#111]" /><span className="w-[3px] h-[3px] rounded-full bg-[#111]" /><span className="w-[3px] h-[3px] rounded-full bg-[#111]" />
    </div>
  </div>
);

const Rule = () => <div className="w-[428px] h-[3px] border border-[#9a9a9a] border-r-[#eee] border-b-[#eee]" />;

const Page = () => (
  <main className="grow bg-white pl-[10px] text-[20px] text-black font-['Liberation_Serif',serif]">
    <h1 className="pt-[11px] text-[40px] leading-[46px] font-bold whitespace-nowrap">Index of /lab8_php_database</h1>
    <div className="pl-[3px] pt-[32px]">
      <div className="grid grid-cols-[25px_132px_118px_34px_99px] gap-x-[5px] text-center font-bold text-[#0000ee] underline decoration-2 leading-[23px] whitespace-nowrap">
        <span />
        <span>Name</span>
        <span>Last modified</span>
        <span>Size</span>
        <span>Description</span>
      </div>
      <div className="pt-[17px]"><Rule /></div>
      <div className="grid grid-cols-[25px_132px_118px_34px_99px] gap-x-[5px] items-center h-[57px] pb-px leading-[23px]">
        <svg viewBox="0 0 25 26" className="w-[25px] h-[26px]">
          <path d="M10 0q14 1 15 11-4 5-12 2Q13 8 10 6z" fill="#333" /><path d="M25 9q1 10-12 12l-5 1-1 4L0 18l5-7 1.500 3.500Q20 16 25 9z" fill="#000" />
          <path d="M10 1v9M12 1v5" stroke="#777" strokeDasharray="1 1" />
        </svg>
        <a className="text-[#551a8b] underline whitespace-nowrap -mt-px">Parent Directory</a>
        <span />
        <span className="text-right -mt-px">-</span>
        <span />
      </div>
      <Rule />
    </div>
    <address className="pt-[13px] leading-[23px] italic whitespace-nowrap">Apache/2.4.52 (Win64) OpenSSL/1.1.1m PHP/8.1.2 Server at localhost Port 80</address>
    <div className="mt-[74px] ml-[204px] w-[202px] h-6 bg-[#f5fafd] flex items-center pl-[34px] font-['Open_Sans',sans-serif] text-[14px] tracking-[0.1px] text-[#ebebe9]">Full-screen Snip</div>
  </main>
);

const BrowserWindow = () => (
  <div className="relative grow min-w-0 border-t border-r border-t-[#8d8d8d] border-r-[#4a4a4a] flex flex-col">
    <TabStrip />
    <Toolbar />
    <Page />
    <div className="h-px bg-[#3c3c3c]" />
    <div className="absolute left-0 top-0 bottom-0 w-4 bg-linear-to-r from-black/20 to-transparent" />
  </div>
);

export default function App() {
  return (
    <div className="w-[1920px] h-[1080px] overflow-hidden flex flex-col bg-[#101010] font-['Open_Sans','Noto_Sans',sans-serif]">
      <Taskbar />
      <div className="grow min-h-0 flex">
        <ExplorerWindow />
        <BrowserWindow />
      </div>
    </div>
  );
}
